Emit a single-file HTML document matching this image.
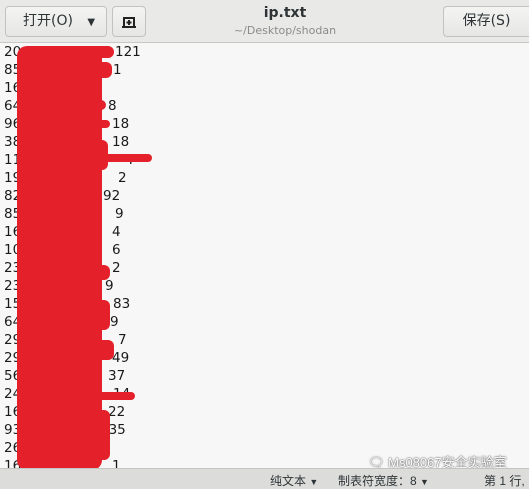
<!DOCTYPE html>
<html><head><meta charset="utf-8"><style>
*{margin:0;padding:0;box-sizing:border-box}
body{width:529px;height:489px;overflow:hidden;background:#f7f7f7;font-family:"DejaVu Sans","Liberation Sans","Noto Sans CJK SC",sans-serif;position:relative}
.hdr{position:absolute;left:0;top:0;width:529px;height:43px;background:#e9e9e8;border-bottom:1px solid #c8c8c6}
.btn{position:absolute;top:6px;height:31px;border:1px solid #c2c2c0;border-radius:4px;background:linear-gradient(#f4f4f3,#e6e6e5);font-size:14px;color:#2e3436;line-height:29px;text-align:center}
.title{position:absolute;left:200px;width:170px;top:5px;text-align:center;font-size:14px;font-weight:bold;color:#2e3436}
.sub{position:absolute;left:200px;width:170px;top:24px;text-align:center;font-size:11px;color:#8a8c8a}
.l{position:absolute;font-size:13.5px;line-height:18px;color:#1a1a1a;white-space:pre}
.r{position:absolute;background:#e4202a;border-radius:6px}
.sb{position:absolute;left:0;top:468px;width:529px;height:21px;background:#dcdcdb;border-top:1px solid #c4c4c2;font-size:12px;color:#2e3436;font-family:"Liberation Sans","Noto Sans CJK SC",sans-serif}
.sb span{position:absolute;top:3px}
.wm{position:absolute;left:368px;top:452px;font-size:13px;color:#fff;text-shadow:0 0 2px #666,0 0 1px #444;font-family:"Liberation Sans","Noto Sans CJK SC",sans-serif}
</style></head><body>
<div class="hdr">
<div class="btn" style="left:5px;width:102px;text-align:left;padding-left:17px">打开(O) <span style="font-size:10px;margin-left:10px">▼</span></div>
<div class="btn" style="left:112px;width:34px"><svg width="16" height="16" viewBox="0 0 16 16" style="margin-top:7px"><path d="M3 13V4h10v9M1 13h14M8 6v5M5.5 8.5h5" stroke="#222" stroke-width="2" fill="none"/></svg></div>
<div class="title">ip.txt</div>
<div class="sub">~/Desktop/shodan</div>
<div class="btn" style="left:443px;width:86px;border-right:none;border-radius:4px 0 0 4px">保存(S)</div>
</div>
<div class="l" style="left:4px;top:43px">20
85
16
64
96
38
11
19
82
85
16
10
23
23
15
64
29
29
56
24
16
93
26
16</div>
<div class="l" style="top:43px;left:115px">121</div>
<div class="l" style="top:61px;left:113px">1</div>
<div class="l" style="top:97px;left:108px">8</div>
<div class="l" style="top:115px;left:112px">18</div>
<div class="l" style="top:133px;left:112px">18</div>
<div class="l" style="top:151px;left:125px">4</div>
<div class="l" style="top:169px;left:118px">2</div>
<div class="l" style="top:187px;left:103px">92</div>
<div class="l" style="top:205px;left:115px">9</div>
<div class="l" style="top:223px;left:112px">4</div>
<div class="l" style="top:241px;left:112px">6</div>
<div class="l" style="top:259px;left:112px">2</div>
<div class="l" style="top:277px;left:105px">9</div>
<div class="l" style="top:295px;left:113px">83</div>
<div class="l" style="top:313px;left:110px">9</div>
<div class="l" style="top:331px;left:118px">7</div>
<div class="l" style="top:349px;left:112px">49</div>
<div class="l" style="top:367px;left:108px">37</div>
<div class="l" style="top:385px;left:113px">14</div>
<div class="l" style="top:403px;left:108px">22</div>
<div class="l" style="top:421px;left:100px">135</div>
<div class="l" style="top:457px;left:112px">1</div>
<div class="r" style="left:17px;top:46px;width:85px;height:424px;border-radius:10px"></div>
<div class="r" style="left:30px;top:46px;width:84px;height:12px"></div>
<div class="r" style="left:60px;top:62px;width:52px;height:16px"></div>
<div class="r" style="left:70px;top:100px;width:36px;height:10px"></div>
<div class="r" style="left:80px;top:120px;width:30px;height:8px"></div>
<div class="r" style="left:80px;top:140px;width:28px;height:30px"></div>
<div class="r" style="left:100px;top:154px;width:52px;height:8px"></div>
<div class="r" style="left:80px;top:190px;width:22px;height:40px"></div>
<div class="r" style="left:85px;top:265px;width:25px;height:15px"></div>
<div class="r" style="left:85px;top:300px;width:25px;height:30px"></div>
<div class="r" style="left:90px;top:340px;width:24px;height:20px"></div>
<div class="r" style="left:95px;top:392px;width:40px;height:8px"></div>
<div class="r" style="left:85px;top:410px;width:25px;height:50px"></div>
<div class="wm">🗨 Ms08067安全实验室</div>
<div class="sb">
<span style="left:270px">纯文本 <span style="position:static;font-size:9px">▼</span></span>
<span style="left:338px">制表符宽度：8 <span style="position:static;font-size:9px">▼</span></span>
<span style="left:484px">第 1 行,</span>
</div>
</body></html>
